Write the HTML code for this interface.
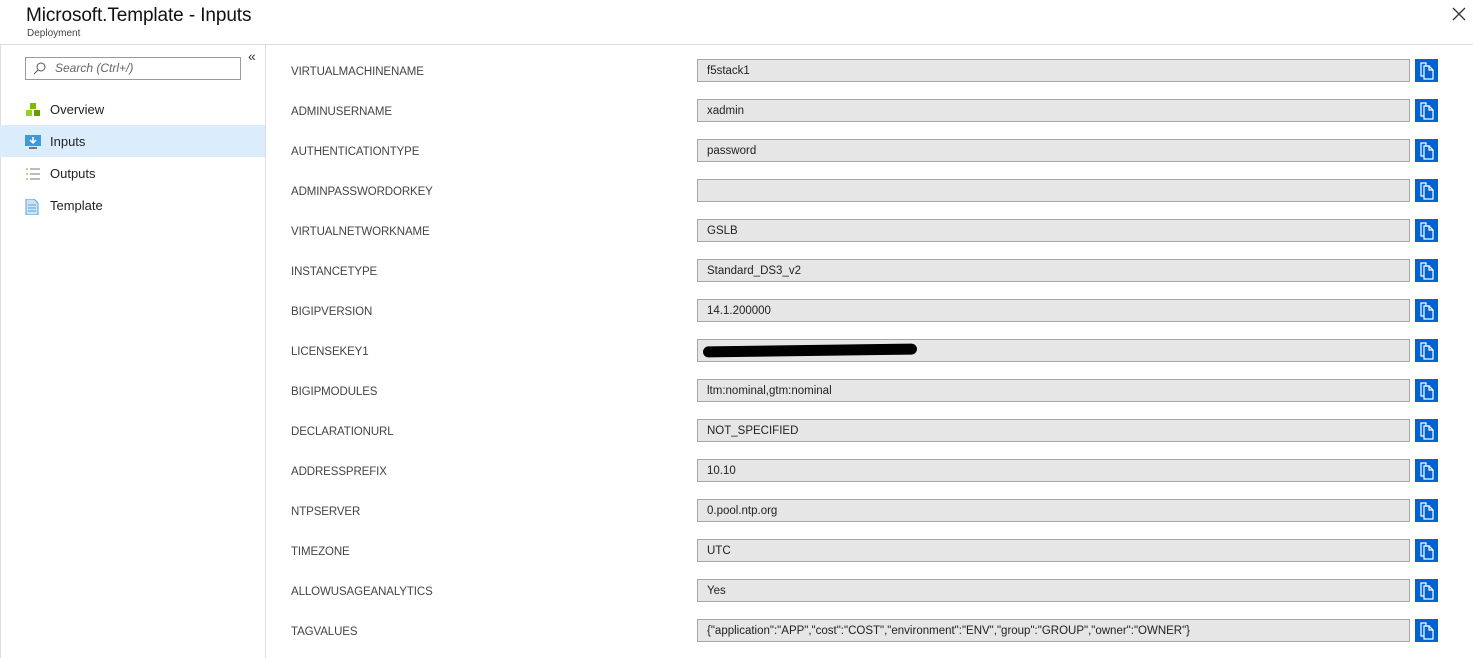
<!DOCTYPE html>
<html><head><meta charset="utf-8"><style>
*{box-sizing:border-box;margin:0;padding:0}
body{width:1473px;height:658px;overflow:hidden;background:#fff;font-family:"Segoe UI","Liberation Sans",sans-serif;color:#333;position:relative}
.h1{position:absolute;left:26px;top:5px;font-size:19px;color:#111;letter-spacing:-0.1px}
.sub{position:absolute;left:27px;top:28px;font-size:10px;color:#444}
.close{position:absolute;left:1452px;top:7px}
.hline{position:absolute;left:0;top:44px;width:1473px;height:1px;background:#ddd}
.vline{position:absolute;left:265px;top:45px;width:1px;height:613px;background:#ddd}
.lb{position:absolute;left:0;top:45px;width:1px;height:613px;background:#ddd}
.search{position:absolute;left:25px;top:57px;width:216px;height:23px;border:1px solid #999;font-size:12px;font-style:italic;color:#666;padding:3px 0 0 29px}
.chev{position:absolute;left:248px;top:48px;font-size:14px;color:#333}
.nav{position:absolute;left:0;width:265px;height:32px;font-size:13px;padding:9px 0 0 50px;color:#222}
.nav.sel{background:#dbedfc}
.ic{position:absolute;left:25px;top:10px}
.lbl{position:absolute;left:291px;font-size:11.5px;color:#444;letter-spacing:-0.1px;margin-top:2px}
.box{position:absolute;left:697px;width:713px;height:23px;border:1px solid #a6a6a6;background:#e6e6e6;font-size:11.5px;color:#222;padding:5px 0 0 9px}
.btn{position:absolute;left:1415px;width:23px;height:23px;background:#0063d1}
</style></head><body>
<div class="h1">Microsoft.Template - Inputs</div>
<div class="sub">Deployment</div>
<svg class="close" width="14" height="14"><path d="M1 1L13 13M13 1L1 13" stroke="#333" stroke-width="1.3"/></svg>
<div class="hline"></div><div class="vline"></div><div class="lb"></div>
<div class="search">Search (Ctrl+/)</div>
<svg style="position:absolute;left:33px;top:62px" width="13" height="13"><circle cx="8" cy="5" r="4" fill="none" stroke="#555"/><path d="M5 8L1 12" stroke="#555"/></svg>
<div class="chev">«</div>
<div class="nav" style="top:93px"><svg class="ic" width="16" height="14"><rect x="5" y="0" width="6" height="6" fill="#7fba00"/><rect x="1" y="7" width="6" height="6" fill="#9bcd2c"/><rect x="9" y="7" width="6" height="6" fill="#5e9e00"/></svg>Overview</div>
<div class="nav sel" style="top:125px"><svg class="ic" width="16" height="15"><rect x="0" y="0" width="16" height="11" fill="#3f9ad8"/><path d="M8 2V8M5 5L8 8L11 5" stroke="#fff" stroke-width="1.5" fill="none"/><rect x="4" y="12" width="8" height="2" fill="#777"/></svg>Inputs</div>
<div class="nav" style="top:157px"><svg class="ic" width="16" height="14"><path d="M1 2h2M1 7h2M1 12h2" stroke="#7fba00"/><path d="M5 2h10M5 7h10M5 12h10" stroke="#777"/></svg>Outputs</div>
<div class="nav" style="top:189px"><svg class="ic" width="14" height="16"><path d="M1 0h8l4 4v12H1z" fill="#cde3f5" stroke="#59a3dc"/><path d="M3 6h8M3 9h8M3 12h8" stroke="#59a3dc"/></svg>Template</div>

<div class="lbl" style="top:64px">VIRTUALMACHINENAME</div><div class="box" style="top:59px">f5stack1</div>
<div class="lbl" style="top:104px">ADMINUSERNAME</div><div class="box" style="top:99px">xadmin</div>
<div class="lbl" style="top:144px">AUTHENTICATIONTYPE</div><div class="box" style="top:139px">password</div>
<div class="lbl" style="top:184px">ADMINPASSWORDORKEY</div><div class="box" style="top:179px"></div>
<div class="lbl" style="top:224px">VIRTUALNETWORKNAME</div><div class="box" style="top:219px">GSLB</div>
<div class="lbl" style="top:264px">INSTANCETYPE</div><div class="box" style="top:259px">Standard_DS3_v2</div>
<div class="lbl" style="top:304px">BIGIPVERSION</div><div class="box" style="top:299px">14.1.200000</div>
<div class="lbl" style="top:344px">LICENSEKEY1</div><div class="box" style="top:339px"><div style="position:absolute;left:5px;top:5px;width:214px;height:11px;background:#000;border-radius:6px;transform:rotate(-0.8deg)"></div></div>
<div class="lbl" style="top:384px">BIGIPMODULES</div><div class="box" style="top:379px">ltm:nominal,gtm:nominal</div>
<div class="lbl" style="top:424px">DECLARATIONURL</div><div class="box" style="top:419px">NOT_SPECIFIED</div>
<div class="lbl" style="top:464px">ADDRESSPREFIX</div><div class="box" style="top:459px">10.10</div>
<div class="lbl" style="top:504px">NTPSERVER</div><div class="box" style="top:499px">0.pool.ntp.org</div>
<div class="lbl" style="top:544px">TIMEZONE</div><div class="box" style="top:539px">UTC</div>
<div class="lbl" style="top:584px">ALLOWUSAGEANALYTICS</div><div class="box" style="top:579px">Yes</div>
<div class="lbl" style="top:624px">TAGVALUES</div><div class="box" style="top:619px">{"application":"APP","cost":"COST","environment":"ENV","group":"GROUP","owner":"OWNER"}</div>

<svg width="0" height="0" style="position:absolute"><defs><g id="cp"><path d="M6 4h5v3h3v10H6z" fill="none" stroke="#fff" stroke-width="1.2"/><path d="M9 7h5l4 4v9H9z" fill="#0063d1" stroke="#fff" stroke-width="1.2"/><path d="M14 7v4h4" fill="none" stroke="#fff" stroke-width="1.2"/></g></defs></svg>
<svg class="btn" style="top:59px"><use href="#cp"/></svg>
<svg class="btn" style="top:99px"><use href="#cp"/></svg>
<svg class="btn" style="top:139px"><use href="#cp"/></svg>
<svg class="btn" style="top:179px"><use href="#cp"/></svg>
<svg class="btn" style="top:219px"><use href="#cp"/></svg>
<svg class="btn" style="top:259px"><use href="#cp"/></svg>
<svg class="btn" style="top:299px"><use href="#cp"/></svg>
<svg class="btn" style="top:339px"><use href="#cp"/></svg>
<svg class="btn" style="top:379px"><use href="#cp"/></svg>
<svg class="btn" style="top:419px"><use href="#cp"/></svg>
<svg class="btn" style="top:459px"><use href="#cp"/></svg>
<svg class="btn" style="top:499px"><use href="#cp"/></svg>
<svg class="btn" style="top:539px"><use href="#cp"/></svg>
<svg class="btn" style="top:579px"><use href="#cp"/></svg>
<svg class="btn" style="top:619px"><use href="#cp"/></svg>
</body></html>
